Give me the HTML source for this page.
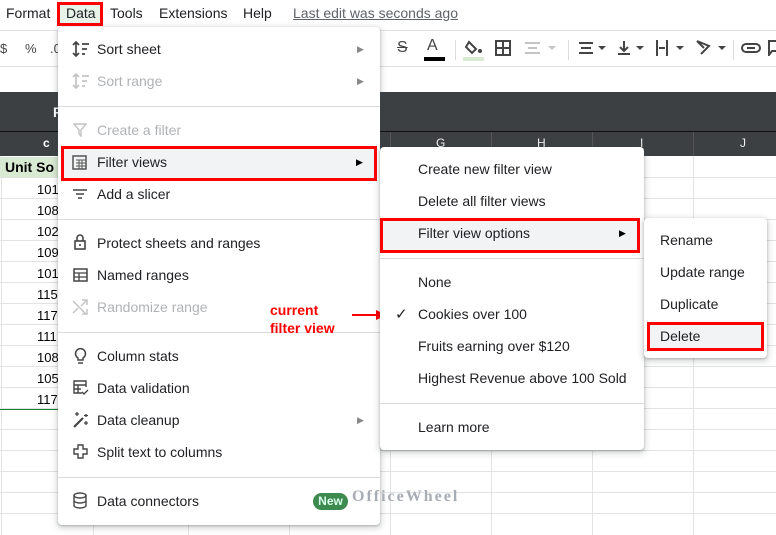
<!DOCTYPE html>
<html><head><style>
*{margin:0;padding:0;box-sizing:border-box}
body{width:776px;height:535px;overflow:hidden;background:#fff;font-family:"Liberation Sans",Arial,sans-serif;position:relative;color:#202124}
.a{position:absolute}
.mb{font-size:14px;top:5px;color:#202124}
.t{font-size:14px;color:#202124;white-space:nowrap}
.g{color:#b0b3b6}
.menu{position:absolute;background:#fff;border-radius:4px;box-shadow:0 2px 6px 2px rgba(60,64,67,.18),0 1px 2px rgba(60,64,67,.3)}
.div{position:absolute;height:1px;background:#dadce0}
.arr{position:absolute;font-size:9px;color:#888}
.hl{position:absolute;background:#f1f3f4;border:3px solid #f00}
.num{position:absolute;font-size:13px;left:37px;color:#000}
.vl{position:absolute;width:1px;background:#e2e3e3}
.hlin{position:absolute;height:1px;background:#e2e3e3}
svg{position:absolute}
</style></head><body>
<div class="a mb" style="left:6px">Format</div>
<div class="a" style="left:57px;top:2px;width:46px;height:24px;background:#e6f4ea;border:3px solid #f00"></div>
<div class="a mb" style="left:66px">Data</div>
<div class="a mb" style="left:110px">Tools</div>
<div class="a mb" style="left:159px">Extensions</div>
<div class="a mb" style="left:243px">Help</div>
<div class="a mb" style="left:293px;color:#5f6368;text-decoration:underline">Last edit was seconds ago</div>
<div class="a" style="left:0;top:30px;width:776px;height:1px;background:#e0e0e0"></div>
<div class="a t" style="left:0;top:41px;font-size:13px;color:#444">$</div>
<div class="a t" style="left:25px;top:41px;font-size:13px;color:#444">%</div>
<div class="a t" style="left:50px;top:41px;font-size:13px;color:#444">.0</div>
<div class="a" style="left:0;top:66px;width:776px;height:1px;background:#e0e0e0"></div>
<div class="a t" style="left:397px;top:39px;font-size:16px;color:#444;text-decoration:line-through">S</div>
<div class="a t" style="left:427px;top:37px;font-size:16px;color:#444">A</div>
<div class="a" style="left:424px;top:57px;width:21px;height:4px;background:#000"></div>
<div class="a" style="left:455px;top:40px;width:1px;height:20px;background:#dadce0"></div>
<svg style="left:464px;top:38px" width="20" height="18"><path d="M5 4 L12 11 L8 15 L2 9 Z" fill="none" stroke="#444" stroke-width="2"/><circle cx="16" cy="13" r="2" fill="#444"/></svg>
<div class="a" style="left:463px;top:57px;width:21px;height:4px;background:#d9ead3"></div>
<svg style="left:495px;top:40px" width="16" height="16"><rect x="1" y="1" width="14" height="14" fill="none" stroke="#444" stroke-width="2"/><path d="M8 1V15M1 8H15" stroke="#444" stroke-width="2"/></svg>
<svg style="left:524px;top:41px" width="36" height="14"><path d="M1 2H16M1 12H16M4 7H13" stroke="#c4c4c4" stroke-width="2"/><path d="M24 5l4 4 4-4z" fill="#c4c4c4"/></svg>
<div class="a" style="left:568px;top:40px;width:1px;height:20px;background:#dadce0"></div>
<svg style="left:578px;top:41px" width="30" height="14"><path d="M1 2H15M3 7H13M1 12H15" stroke="#444" stroke-width="2"/><path d="M20 5l4 4 4-4z" fill="#444"/></svg>
<svg style="left:617px;top:39px" width="30" height="18"><path d="M7 2V11M3 8l4 4 4-4M1 15H13" stroke="#444" stroke-width="2" fill="none"/><path d="M19 7l4 4 4-4z" fill="#444"/></svg>
<svg style="left:655px;top:39px" width="32" height="18"><path d="M2 1V17M12 1V17M4 9H10" stroke="#444" stroke-width="2" fill="none"/><path d="M21 7l4 4 4-4z" fill="#444"/></svg>
<svg style="left:695px;top:39px" width="34" height="18"><path d="M2 2L14 7L6 15M2 2L9 9" stroke="#444" stroke-width="2" fill="none"/><path d="M23 7l4 4 4-4z" fill="#444"/></svg>
<div class="a" style="left:733px;top:40px;width:1px;height:20px;background:#dadce0"></div>
<svg style="left:741px;top:42px" width="20" height="12"><rect x="1" y="2" width="18" height="8" rx="4" fill="none" stroke="#444" stroke-width="2"/><path d="M6 6H14" stroke="#444" stroke-width="2"/></svg>
<svg style="left:768px;top:40px" width="10" height="16"><path d="M1 1H9V11H4L1 15Z" fill="none" stroke="#444" stroke-width="2"/></svg>
<div class="a" style="left:0;top:92px;width:776px;height:64px;background:#3c4043"></div>
<div class="a" style="left:0;top:131px;width:776px;height:1px;background:#111"></div>
<div class="a t" style="left:53px;top:104px;color:#fff;font-weight:bold">F</div>
<div class="a" style="top:136px;font-size:12px;color:#fff;font-weight:bold;left:43px">c</div>
<div class="a" style="left:436px;top:136px;font-size:12px;color:#eee">G</div>
<div class="a" style="left:537px;top:136px;font-size:12px;color:#eee">H</div>
<div class="a" style="left:640px;top:136px;font-size:12px;color:#eee">I</div>
<div class="a" style="left:740px;top:136px;font-size:12px;color:#eee">J</div>
<div class="vl" style="left:390px;top:132px;height:24px;background:#555"></div>
<div class="vl" style="left:491px;top:132px;height:24px;background:#555"></div>
<div class="vl" style="left:592px;top:132px;height:24px;background:#555"></div>
<div class="vl" style="left:693px;top:132px;height:24px;background:#555"></div>
<div class="vl" style="left:390px;top:156px;height:379px"></div>
<div class="vl" style="left:491px;top:156px;height:379px"></div>
<div class="vl" style="left:592px;top:156px;height:379px"></div>
<div class="vl" style="left:693px;top:156px;height:379px"></div>
<div class="vl" style="left:93px;top:156px;height:379px"></div>
<div class="vl" style="left:188px;top:156px;height:379px"></div>
<div class="vl" style="left:289px;top:156px;height:379px"></div>
<div class="vl" style="left:1px;top:156px;height:379px"></div>
<div class="hlin" style="left:0;top:177px;width:776px"></div>
<div class="hlin" style="left:0;top:198px;width:776px"></div>
<div class="hlin" style="left:0;top:219px;width:776px"></div>
<div class="hlin" style="left:0;top:240px;width:776px"></div>
<div class="hlin" style="left:0;top:261px;width:776px"></div>
<div class="hlin" style="left:0;top:282px;width:776px"></div>
<div class="hlin" style="left:0;top:303px;width:776px"></div>
<div class="hlin" style="left:0;top:324px;width:776px"></div>
<div class="hlin" style="left:0;top:345px;width:776px"></div>
<div class="hlin" style="left:0;top:366px;width:776px"></div>
<div class="hlin" style="left:0;top:387px;width:776px"></div>
<div class="hlin" style="left:0;top:408px;width:776px"></div>
<div class="hlin" style="left:0;top:429px;width:776px"></div>
<div class="hlin" style="left:0;top:450px;width:776px"></div>
<div class="hlin" style="left:0;top:471px;width:776px"></div>
<div class="hlin" style="left:0;top:492px;width:776px"></div>
<div class="hlin" style="left:0;top:513px;width:776px"></div>
<div class="a" style="left:0;top:409px;width:60px;height:1px;background:#188038"></div>
<div class="a" style="left:0;top:157px;width:60px;height:20px;background:#d9ead3"></div>
<div class="a" style="left:5px;top:159px;font-size:14px;font-weight:bold;color:#000">Unit So</div>
<div class="num" style="top:182px">101</div>
<div class="num" style="top:203px">108</div>
<div class="num" style="top:224px">102</div>
<div class="num" style="top:245px">109</div>
<div class="num" style="top:266px">101</div>
<div class="num" style="top:287px">115</div>
<div class="num" style="top:308px">117</div>
<div class="num" style="top:329px">111</div>
<div class="num" style="top:350px">108</div>
<div class="num" style="top:371px">105</div>
<div class="num" style="top:392px">117</div>
<div class="menu" style="left:58px;top:27px;width:322px;height:498px"></div>
<svg style="left:72px;top:41px" width="18" height="16"><path d="M4 1V15M1 4L4 1L7 4M1 12L4 15L7 12M10 3H17M10 8H15M10 13H13" stroke="#444" stroke-width="1.7" fill="none"/></svg>
<div class="a t" style="left:97px;top:41px">Sort sheet</div><div class="arr" style="left:357px;top:44px">▶</div>
<svg style="left:72px;top:73px" width="18" height="16"><path d="M4 1V15M1 4L4 1L7 4M1 12L4 15L7 12M10 3H17M10 8H15M10 13H13" stroke="#c4c4c4" stroke-width="1.7" fill="none"/></svg>
<div class="a t g" style="left:97px;top:73px">Sort range</div><div class="arr" style="left:357px;top:76px">▶</div>
<div class="div" style="left:58px;top:106px;width:322px"></div>
<svg style="left:73px;top:123px" width="14" height="14"><path d="M1 1H13L8 7V13L6 11V7Z" fill="none" stroke="#c4c4c4" stroke-width="1.5"/></svg>
<div class="a t g" style="left:97px;top:122px">Create a filter</div>
<div class="hl" style="left:61px;top:146px;width:316px;height:35px"></div>
<svg style="left:72px;top:154px" width="16" height="16"><rect x="1" y="2" width="13" height="13" fill="none" stroke="#555" stroke-width="1.5"/><path d="M4 6H14M4 9H14M4 12H14M7 6V15M10 6V15" stroke="#555" stroke-width="1"/></svg>
<div class="a t" style="left:97px;top:154px">Filter views</div><div class="arr" style="left:356px;top:157px;color:#000">▶</div>
<svg style="left:72px;top:188px" width="16" height="12"><path d="M1 2H15M4 6H12M6 10H10" stroke="#444" stroke-width="1.6"/></svg>
<div class="a t" style="left:97px;top:186px">Add a slicer</div>
<div class="div" style="left:58px;top:219px;width:322px"></div>
<svg style="left:74px;top:234px" width="12" height="16"><path d="M3 7V4A3 3 0 0 1 9 4V7" fill="none" stroke="#444" stroke-width="1.6"/><rect x="1" y="7" width="10" height="8" fill="none" stroke="#444" stroke-width="1.6"/><circle cx="6" cy="11" r="1" fill="#444"/></svg>
<div class="a t" style="left:97px;top:235px">Protect sheets and ranges</div>
<svg style="left:73px;top:268px" width="15" height="14"><rect x="1" y="1" width="13" height="12" fill="none" stroke="#444" stroke-width="1.5"/><path d="M1 5H14M1 9H14M6 5V13" stroke="#444" stroke-width="1.3"/></svg>
<div class="a t" style="left:97px;top:267px">Named ranges</div>
<svg style="left:72px;top:299px" width="16" height="16"><path d="M1 2L14 15M10 15H15V10M10 1H15V6M15 1L9 7M1 14L6 9" stroke="#c4c4c4" stroke-width="1.5" fill="none"/></svg>
<div class="a t g" style="left:97px;top:299px">Randomize range</div>
<div class="div" style="left:58px;top:332px;width:322px"></div>
<svg style="left:74px;top:347px" width="13" height="18"><path d="M4 13V11A5 5 0 1 1 9 11V13ZM4 16H9" fill="none" stroke="#444" stroke-width="1.5"/></svg>
<div class="a t" style="left:97px;top:348px">Column stats</div>
<svg style="left:73px;top:380px" width="16" height="16"><path d="M9 13H1V1H13V7M1 5H13M1 9H8M5 5V13M9 12L11 14L15 10" fill="none" stroke="#444" stroke-width="1.4"/></svg>
<div class="a t" style="left:97px;top:380px">Data validation</div>
<svg style="left:72px;top:411px" width="17" height="18"><path d="M2 16L11 7" stroke="#444" stroke-width="2.2"/><path d="M5 1V5M3 3H7M14 3V6M12 4.5H16M14 10V14M12 12H16" stroke="#444" stroke-width="1.3"/></svg>
<div class="a t" style="left:97px;top:412px">Data cleanup</div><div class="arr" style="left:357px;top:415px">▶</div>
<svg style="left:72px;top:443px" width="17" height="17"><path d="M6 2H11V6H15V11H11V15H6V11H2V6H6Z" fill="none" stroke="#444" stroke-width="1.4"/></svg>
<div class="a t" style="left:97px;top:444px">Split text to columns</div>
<div class="div" style="left:58px;top:477px;width:322px"></div>
<svg style="left:73px;top:492px" width="14" height="17"><ellipse cx="7" cy="3.5" rx="6" ry="2.5" fill="none" stroke="#444" stroke-width="1.4"/><path d="M1 3.5V13.5A6 2.5 0 0 0 13 13.5V3.5M1 8.5A6 2.5 0 0 0 13 8.5" fill="none" stroke="#444" stroke-width="1.4"/></svg>
<div class="a t" style="left:97px;top:493px">Data connectors</div>
<div class="a" style="left:313px;top:493px;width:35px;height:17px;border-radius:9px;background:#3c8a4e;color:#dfe;font-size:12px;font-weight:bold;text-align:center;line-height:17px">New</div>
<div class="a" style="left:352px;top:488px;font-family:'Liberation Serif',serif;font-size:16px;letter-spacing:2px;color:#a8acb3;font-weight:bold">OfficeWheel</div>
<div class="a" style="left:270px;top:301px;font-size:14px;font-weight:bold;color:#f00;line-height:18px">current<br>filter view</div>
<div class="a" style="left:352px;top:314px;width:26px;height:2px;background:#f00"></div>
<svg style="left:376px;top:310px" width="12" height="10"><path d="M0 0L11 5L0 10Z" fill="#f00"/></svg>
<div class="menu" style="left:380px;top:147px;width:264px;height:303px"></div>
<div class="a t" style="left:418px;top:161px">Create new filter view</div>
<div class="a t" style="left:418px;top:193px">Delete all filter views</div>
<div class="hl" style="left:380px;top:218px;width:260px;height:35px"></div>
<div class="a t" style="left:418px;top:225px">Filter view options</div><div class="arr" style="left:619px;top:228px;color:#000">▶</div>
<div class="div" style="left:380px;top:258px;width:264px"></div>
<div class="a t" style="left:418px;top:274px">None</div>
<div class="a t" style="left:395px;top:305px;font-size:15px">✓</div>
<div class="a t" style="left:418px;top:306px">Cookies over 100</div>
<div class="a t" style="left:418px;top:338px">Fruits earning over $120</div>
<div class="a t" style="left:418px;top:370px">Highest Revenue above 100 Sold</div>
<div class="div" style="left:380px;top:403px;width:264px"></div>
<div class="a t" style="left:418px;top:419px">Learn more</div>
<div class="menu" style="left:644px;top:218px;width:123px;height:140px"></div>
<div class="a t" style="left:660px;top:232px">Rename</div>
<div class="a t" style="left:660px;top:264px">Update range</div>
<div class="a t" style="left:660px;top:296px">Duplicate</div>
<div class="hl" style="left:647px;top:322px;width:117px;height:29px"></div>
<div class="a t" style="left:660px;top:328px">Delete</div>
</body></html>
